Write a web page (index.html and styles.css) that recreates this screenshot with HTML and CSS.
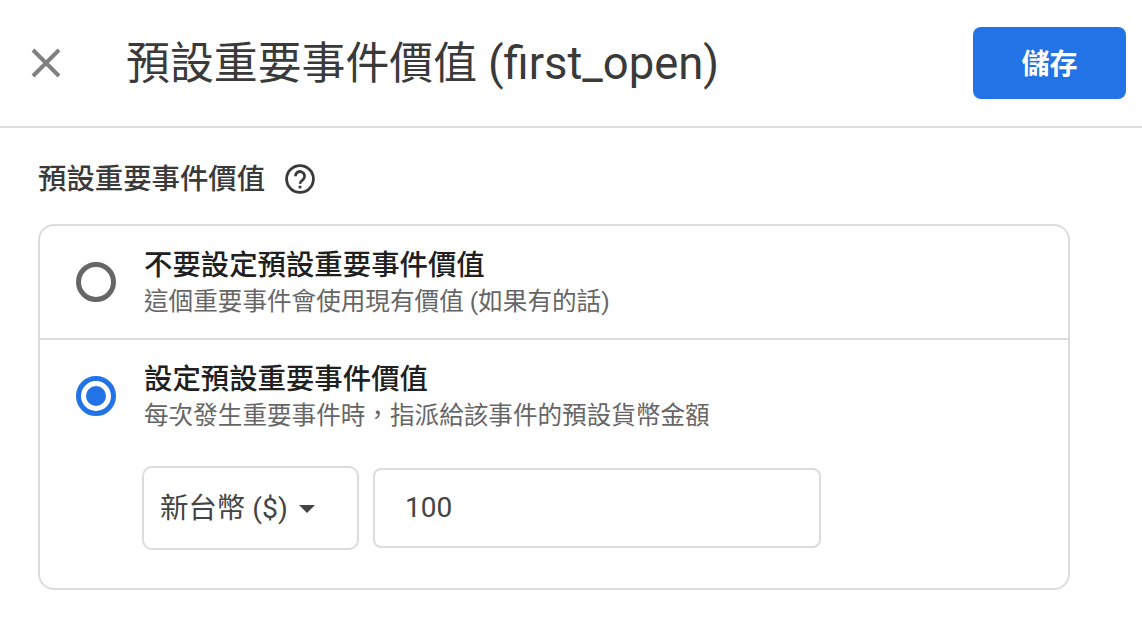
FILE: index.html
```html
<!DOCTYPE html>
<html lang="zh-Hant">
<head>
<meta charset="utf-8">
<title>預設重要事件價值</title>
<link rel="stylesheet" href="styles.css">
</head>
<body>
<header class="header">
  <svg class="close" viewBox="0 0 30 30" aria-hidden="true"><path d="M2 2 L28 28 M28 2 L2 28"/></svg>
  <h1 class="title">預設重要事件價值 <span class="title-latin">(first_open)</span></h1>
  <button class="save">儲存</button>
</header>
<main class="content">
  <div class="label-row">
    <h2 class="label">預設重要事件價值</h2>
    <svg class="help" viewBox="0 0 30 30" aria-hidden="true">
      <circle cx="15" cy="15" r="13.4"/>
      <path d="M10.4 12.2a4.6 4.6 0 1 1 7.6 3.4c-1.6 1.3-3 2.2-3 4.2"/>
      <circle class="dot" cx="15" cy="23" r="1.6"/>
    </svg>
  </div>
  <section class="card">
    <div class="option first">
      <span class="radio"></span>
      <div class="option-text">
        <div class="option-title">不要設定預設重要事件價值</div>
        <div class="option-sub">這個重要事件會使用現有價值 (如果有的話)</div>
      </div>
    </div>
    <div class="option second">
      <span class="radio checked"></span>
      <div class="option-text">
        <div class="option-title">設定預設重要事件價值</div>
        <div class="option-sub">每次發生重要事件時，指派給該事件的預設貨幣金額</div>
        <div class="fields">
          <div class="select"><span>新台幣 ($)</span><span class="caret"></span></div>
          <div class="input">100</div>
        </div>
      </div>
    </div>
  </section>
</main>
</body>
</html>
```
FILE: styles.css
```css
* { box-sizing: border-box; }
html, body { margin: 0; padding: 0; background: #fff; }
body {
  width: 1142px;
  height: 622px;
  overflow: hidden;
  font-family: Roboto, "Noto Sans CJK TC", sans-serif;
  color: #3c3c3c;
}
.header {
  height: 128px;
  border-bottom: 2px solid #dcdcdc;
  display: flex;
  align-items: center;
  padding: 0 16px 0 31px;
}
.close { width: 30px; height: 30px; flex: none; }
.close path { stroke: #808080; stroke-width: 4; fill: none; }
.title {
  margin: 1px 0 0 65px;
  font-size: 43.9px;
  font-weight: 400;
  line-height: 1;
  color: #3a3a3a;
  flex: 1;
  white-space: nowrap;
}
.title-latin { font-size: 45.4px; }
.save {
  width: 153px;
  height: 72px;
  padding: 0 0 3px;
  border: 0;
  border-radius: 8px;
  background: #2173e6;
  color: #fff;
  font: 700 28px Roboto, "Noto Sans CJK TC", sans-serif;
}
.content { padding: 0 72px 0 38px; }
.label-row {
  height: 96px;
  padding-top: 6px;
  display: flex;
  align-items: center;
  gap: 20px;
}
.label {
  margin: 2px 0 0;
  font-size: 28.4px;
  font-weight: 500;
  line-height: 1;
  color: #3a3a3a;
}
.help { width: 30px; height: 30px; }
.help circle, .help path { fill: none; stroke: #3a3a3a; stroke-width: 2.8; }
.help .dot { fill: #3a3a3a; stroke: none; }
.card {
  height: 366px;
  border: 2px solid #dcdcdc;
  border-radius: 16px;
}
.option { display: flex; padding-left: 36px; }
.first { height: 114px; padding-top: 21px; border-bottom: 2px solid #dcdcdc; }
.second { padding-top: 21px; }
.radio {
  width: 40px;
  height: 40px;
  margin-top: 15px;
  flex: none;
  border: 5px solid #666;
  border-radius: 50%;
}
.radio.checked {
  border-color: #2173e6;
  padding: 5px;
  background: #2173e6 content-box;
}
.option-text { margin-left: 28px; }
.option-title {
  font-size: 28.4px;
  font-weight: 500;
  line-height: 37px;
  color: #202020;
  white-space: nowrap;
}
.option-sub {
  font-size: 24.6px;
  line-height: 36px;
  color: #666;
  white-space: nowrap;
}
.fields { display: flex; align-items: center; gap: 14px; margin: 32px 0 0 -2px; }
.select {
  width: 217px;
  height: 84px;
  border: 2px solid #dcdcdc;
  border-radius: 10px;
  display: flex;
  align-items: center;
  padding: 0 0 6px 16px;
  font-size: 28.4px;
  color: #444;
  white-space: nowrap;
}
.caret {
  margin: 8px 0 0 11px;
  border-left: 8px solid transparent;
  border-right: 8px solid transparent;
  border-top: 8px solid #444;
}
.input {
  width: 448px;
  height: 80px;
  border: 2px solid #dcdcdc;
  border-radius: 8px;
  display: flex;
  align-items: center;
  padding: 0 0 2px 30px;
  font-size: 28px;
  color: #444;
}
```
